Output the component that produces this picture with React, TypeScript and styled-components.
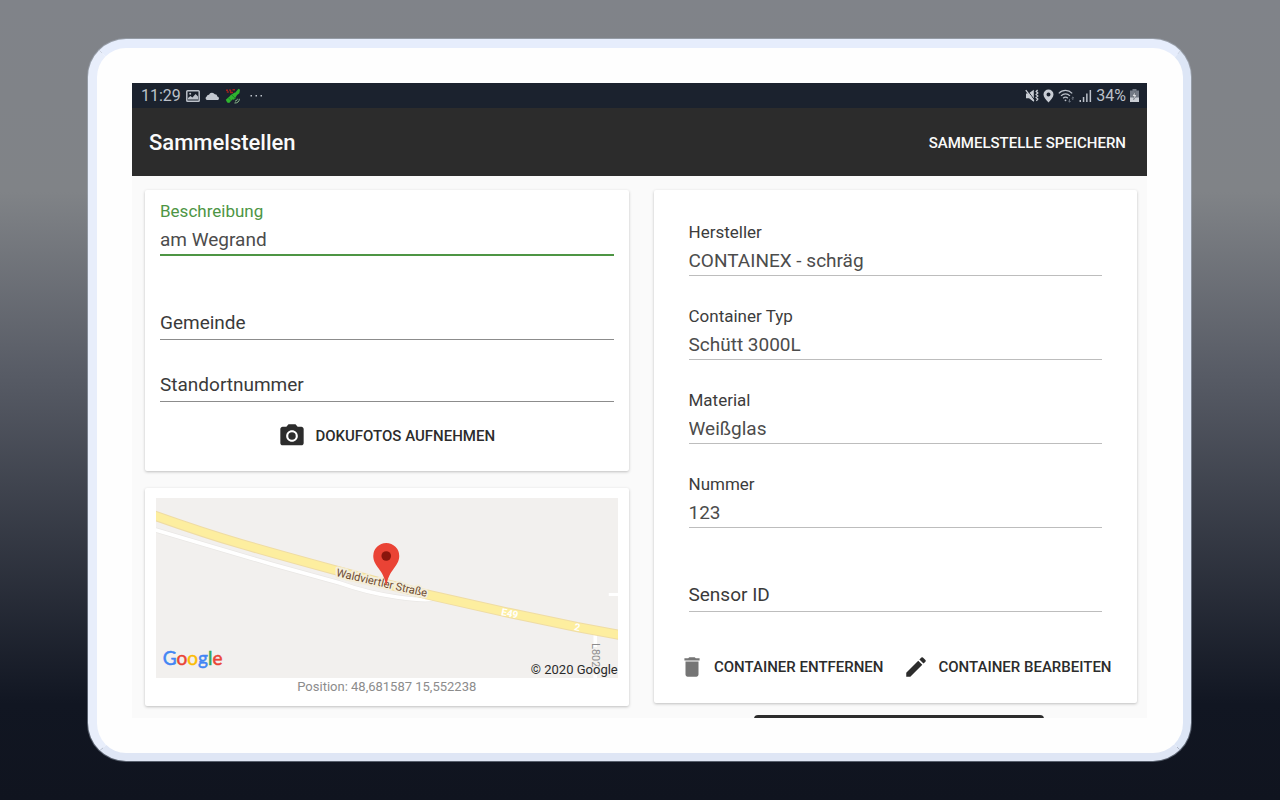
import React, { useId, useState } from "react";
import styled, { createGlobalStyle, css } from "styled-components";
import { MdDelete, MdEdit, MdPhotoCamera } from "react-icons/md";

const GlobalStyle = createGlobalStyle`
  *, *::before, *::after { box-sizing: border-box; }
  body { margin: 0; font-family: Roboto, "Liberation Sans", sans-serif; }
  button, input { font: inherit; }
`;

const Page = styled.div`
  display: flex;
  height: 100vh;
  padding: 39px 89px 39px 88px;
  background: linear-gradient(#808389 0%, #808387 24%, #575b65 47%, #111622 88%, #10141f 100%);
`;

const Tablet = styled.div`
  flex: 1;
  min-width: 0;
  display: flex;
  padding: 35px 36px 35px 35px;
  border-style: solid;
  border-width: 9px 8px 8px 9px;
  border-color: #e6edfc #dde6f6 #dfe6f5 #e8eefb;
  border-radius: 38px;
  background: #fefefe;
  box-shadow: 0 0 0 1px rgba(176, 186, 202, 0.45);
`;

const Screen = styled.main`
  flex: 1;
  min-width: 0;
  display: flex;
  flex-direction: column;
  overflow: hidden;
  background: #fafafa;
`;

const StatusBar = styled.div`
  flex: none;
  display: flex;
  align-items: center;
  justify-content: space-between;
  height: 25px;
  padding: 1px 8px 0 9px;
  background: #1b222e;
  color: #bcc1ca;
  font-size: 16px;
  line-height: 24px;
`;

const StatusGroup = styled.div<{ $gap: number }>`
  display: flex;
  align-items: center;
  gap: ${(p) => p.$gap}px;

  svg { display: block; }
`;

const AppBar = styled.header`
  flex: none;
  display: flex;
  align-items: center;
  justify-content: space-between;
  height: 68px;
  padding: 1px 21px 0 17px;
  background: #2c2c2c;
  color: #fafafa;
`;

const Title = styled.h1`
  margin: 0;
  font-size: 22px;
  font-weight: 500;
  line-height: 28px;
`;

const TextButton = styled.button<{ $tone?: "light" | "dark" }>`
  display: flex;
  align-items: center;
  gap: 9px;
  height: 48px;
  padding: 0;
  border: 0;
  background: none;
  color: ${(p) => (p.$tone === "light" ? "#fafafa" : "#2c2c2c")};
  font-size: 15px;
  font-weight: 500;
  text-transform: uppercase;
  white-space: nowrap;
  cursor: pointer;
`;

const Content = styled.div`
  flex: 1;
  min-height: 0;
  overflow: auto;
  scrollbar-width: none;
  display: grid;
  grid-template-columns: repeat(2, minmax(0, 1fr));
  align-items: start;
  gap: 25px;
  padding: 14px 10px 14px 13px;
`;

const Column = styled.div<{ $gap: number }>`
  display: flex;
  flex-direction: column;
  gap: ${(p) => p.$gap}px;
`;

const Card = styled.section<{ $padding: string }>`
  padding: ${(p) => p.$padding};
  border-radius: 2px;
  background: #fff;
  box-shadow: 0 1px 3px rgba(0, 0, 0, 0.24);
`;

const Fields = styled.div`
  display: flex;
  flex-direction: column;
  gap: 29px;
`;

const FieldBox = styled.div`
  display: flex;
  flex-direction: column;
`;

const FieldLabel = styled.label<{ $active?: boolean }>`
  height: 22px;
  font-size: 17px;
  line-height: 22px;
  color: ${(p) => (p.$active ? "#4d9544" : "#3c3c3c")};
`;

const FieldInput = styled.input<{ $line: "active" | "strong" | "soft"; $empty: boolean }>`
  width: 100%;
  height: ${(p) => (p.$line === "active" ? 34 : 33)}px;
  padding: ${(p) => (p.$empty ? "1px 0 2px" : "3px 0 1px")};
  border: 0;
  border-radius: 0;
  outline: 0;
  background: none;
  color: #4c4c4c;
  font-size: 19px;
  line-height: 24px;

  ${(p) =>
    p.$line === "active"
      ? css`border-bottom: 2px solid #4d9544;`
      : p.$line === "strong"
        ? css`border-bottom: 1px solid #8c8c8c;`
        : css`border-bottom: 1px solid #bdbdbd;`}

  &::placeholder { color: #3a3a3a; opacity: 1; }
`;

const ButtonRow = styled.div<{ $top: number }>`
  display: flex;
  justify-content: center;
  gap: 20px;
  margin-top: ${(p) => p.$top}px;
`;

const MapFrame = styled.div`
  height: 180px;

  svg { display: block; width: 100%; height: 100%; }
`;

const Position = styled.p`
  margin: 0;
  color: #8c8c8c;
  font-size: 13px;
  line-height: 18px;
  text-align: center;
`;

const AddButton = styled.button`
  align-self: center;
  width: 60%;
  height: 48px;
  margin-left: 8px;
  border: 0;
  border-radius: 4px;
  background: #2c2c2c;
`;

type FieldProps = {
  label: string;
  initial?: string;
  line?: "active" | "strong" | "soft";
  compact?: boolean;
};

function Field({ label, initial = "", line = "soft", compact = false }: FieldProps) {
  const id = useId();
  const [value, setValue] = useState(initial);
  const empty = value === "";
  return (
    <FieldBox>
      {!compact && (
        <FieldLabel htmlFor={id} $active={line === "active"}>
          {empty ? "" : label}
        </FieldLabel>
      )}
      <FieldInput
        id={id}
        aria-label={label}
        placeholder={label}
        value={value}
        onChange={(e) => setValue(e.target.value)}
        $line={line}
        $empty={empty}
      />
    </FieldBox>
  );
}

function PictureIcon() {
  return (
    <svg width="14" height="12" viewBox="0 0 14 12" fill="none" stroke="#bcc1ca">
      <rect x="0.8" y="0.8" width="12.4" height="10.4" rx="0.8" strokeWidth="1.5" />
      <path d="M2 9.6V8l2.4-2 2 1.400L9.600 4 12 6.600v3z" fill="#bcc1ca" stroke="none" />
      <circle cx="4.200" cy="3.700" r="1" fill="#bcc1ca" stroke="none" />
    </svg>
  );
}

function CloudIcon() {
  return (
    <svg width="15" height="12" viewBox="0 0 15 12" fill="#c3c8d0">
      <path d="M2 10A1.800 1.800 0 0 1 1.700 6.600 2.200 2.200 0 0 1 4 4.800 3.300 3.300 0 0 1 9.800 4.300 2.400 2.400 0 0 1 12.300 6.600 1.800 1.800 0 0 1 13 10z" />
    </svg>
  );
}

function SatelliteIcon() {
  return (
    <svg width="16" height="16" viewBox="0 0 16 16" fill="none">
      <path d="M1 2.200h2M4.500 1.500l1.500 2M7.500 1.800H10M1.800 4h2M5 4.600h3" stroke="#a3231f" strokeWidth="1.500" />
      <path d="M9.500 5.500 13.500.8l1.500 1-.6 3.400-3 2.300zM5 7.500 9.800 4.500l2.200 2.700L9 11.700l-2.500-.6zM.8 11.800l4.500-4 2.700 3L4.200 15l-2-.4z" fill="#2fb52f" />
      <path d="M6.500 6.500l4.500 4.700M3.500 9.800l2.600 3" stroke="#1a7a26" strokeWidth="0.800" />
      <path d="M9.500 15c3 .2 5-1.600 4.800-4.200M10 13c1.500 0 2.300-.8 2.300-2.200" stroke="#8fbf90" />
    </svg>
  );
}

function DotsIcon() {
  return (
    <svg width="18" height="4" viewBox="0 0 18 4" fill="#bcc1ca">
      <rect x="4.500" y="1" width="1.500" height="1.500" />
      <rect x="9.500" y="1" width="1.500" height="1.500" />
      <rect x="14.500" y="1" width="1.500" height="1.500" />
    </svg>
  );
}

function MuteIcon() {
  return (
    <svg width="14" height="14" viewBox="0 0 14 14" fill="none" stroke="#c9cdd4">
      <path d="M1 4.500h2.500L8.800.8v12L4 9.200H1z" fill="#c9cdd4" stroke="none" />
      <path d="M1.800.6l8 10.800" stroke="#1b222e" strokeWidth="1" />
      <path d="M0.800 1.200l8 10.800" strokeWidth="1.300" />
      <path d="M12.600 1l-1.400 1.500 1.600 1.500-1.600 1.500 1.600 1.500-1.600 1.500 1.600 1.500-1.400 1.800" strokeWidth="1.300" />
    </svg>
  );
}

function PinIcon() {
  return (
    <svg width="11" height="14" viewBox="0 0 11 14" fill="#c9cdd4">
      <path d="M5.500.5a5 5 0 0 1 5 5c0 3-2.600 5-5 8-2.400-3-5-5-5-8a5 5 0 0 1 5-5zm0 3a2 2 0 1 0 0 4 2 2 0 0 0 0-4z" fillRule="evenodd" />
    </svg>
  );
}

function WifiIcon() {
  return (
    <svg width="17" height="14" viewBox="0 0 17 14" fill="none" stroke="#bcc1ca" strokeWidth="1.300">
      <path d="M0.800 4.400C4.600.4 10.400.4 14.200 4.400M3 6.900c2.700-2.700 6.300-2.700 9 0M5.200 9.200c1.300-1.400 3.300-1.400 4.600 0" />
      <circle cx="7.500" cy="11.300" r="0.900" fill="#bcc1ca" stroke="none" />
      <path d="M11.500 10v3M10.300 12l1.200 1.200 1.200-1.200M14.800 11V8M13.600 9.200 14.800 8 16 9.200" stroke="#68707c" strokeWidth="1" />
    </svg>
  );
}

function SignalIcon() {
  return (
    <svg width="13" height="14" viewBox="0 0 13 14" fill="#bcc1ca">
      <rect x="0.500" y="11" width="1.500" height="2" />
      <rect x="3.800" y="8" width="1.500" height="5" />
      <rect x="7.100" y="4.500" width="1.500" height="8.500" />
      <rect x="10.600" y="1" width="1.500" height="12" />
    </svg>
  );
}

function BatteryIcon() {
  return (
    <svg width="9" height="14" viewBox="0 0 9 14">
      <path d="M2.500 0h4v1.400H9V13H0V1.400h2.500z" fill="#737a86" />
      <path d="M0 8.500h9V13H0z" fill="#c9cdd4" />
      <path d="M5.300 2.300 2 7.500h2.200l-.6 3.300L7 5.800H4.800z" fill="#e6e8ec" stroke="#3a414d" strokeWidth="0.400" />
    </svg>
  );
}

const road = "M-6 16 L0 18 Q48 35 84 45.500 T177 71.500 T271 96.500 L354 115 L421 129 L470 138";
const lane = "M-4 31 L0 32 L117 66.500 L184 85 Q212 95 241 99 T276 101";

const logoLetters = [
  ["G", "#4285f4"],
  ["o", "#ea4335"],
  ["o", "#fbbc05"],
  ["g", "#4285f4"],
  ["l", "#34a853"],
  ["e", "#ea4335"],
];

function LocationMap() {
  return (
    <MapFrame>
      <svg viewBox="0 0 462 180" preserveAspectRatio="xMidYMid slice" role="img">
        <rect x="-400" y="-200" width="1262" height="580" fill="#f2f0ee" />
        <g fill="none" stroke="#fff">
          <path d={lane} strokeWidth="5" stroke="#e9e7e5" />
          <path d={lane} strokeWidth="3.500" />
          <path d="M453 96.500h12" strokeWidth="3" />
          <path d="M439.500 133v16M439.500 170v12" strokeWidth="3.500" />
        </g>
        <path d={road} fill="none" stroke="#efdca4" strokeWidth="10" />
        <path d={road} fill="none" stroke="#fdee9f" strokeWidth="8" />
        <g fontFamily="Roboto, sans-serif">
          <text transform="translate(345 117) rotate(12)" fontSize="10" fontWeight="700" fill="#fff">
            E49
          </text>
          <text transform="translate(418 132) rotate(12)" fontSize="10" fontWeight="700" fill="#fff">
            2
          </text>
          <text
            transform="translate(180 78) rotate(13)"
            fontSize="11"
            fill="#6d4a30"
            stroke="#f4eedb"
            strokeWidth="4"
            strokeLinejoin="round"
            paintOrder="stroke"
          >
            Waldviertler Straße
          </text>
          <text transform="translate(436 145) rotate(90)" fontSize="11" fill="#8d8d8d">
            L802
          </text>
          <text x="462" y="176" fontSize="13" textAnchor="end" fill="#2b2b2b" stroke="#f2f0ee" strokeWidth="2" paintOrder="stroke">
            © 2020 Google
          </text>
        </g>
        <path
          d="M230.500 45a13 13 0 0 1 13 13c0 5-2.600 8.600-5.600 12.800-3.200 4.400-6 8.600-7 16.200h-.8c-1-7.600-3.800-11.800-7-16.200-3-4.200-5.600-7.800-5.600-12.800a13 13 0 0 1 13-13z"
          fill="#ea4335"
        />
        <circle cx="230.500" cy="58" r="4.800" fill="#8a150c" />
        <text x="7" y="167" fontFamily="Lato, sans-serif" fontSize="19" strokeWidth="0.500">
          {logoLetters.map(([letter, color], i) => (
            <tspan key={i} fill={color} stroke={color}>
              {letter}
            </tspan>
          ))}
        </text>
      </svg>
    </MapFrame>
  );
}

export default function App() {
  return (
    <>
      <GlobalStyle />
      <Page>
        <Tablet>
          <Screen>
            <StatusBar>
              <StatusGroup $gap={5}>
                <span>11:29</span>
                <PictureIcon />
                <CloudIcon />
                <SatelliteIcon />
                <DotsIcon />
              </StatusGroup>
              <StatusGroup $gap={4}>
                <MuteIcon />
                <PinIcon />
                <WifiIcon />
                <SignalIcon />
                <span>34%</span>
                <BatteryIcon />
              </StatusGroup>
            </StatusBar>
            <AppBar>
              <Title>Sammelstellen</Title>
              <TextButton type="button" $tone="light">
                Sammelstelle speichern
              </TextButton>
            </AppBar>
            <Content>
              <Column $gap={17}>
                <Card $padding="10px 15px 11px">
                  <Fields>
                    <Field label="Beschreibung" initial="am Wegrand" line="active" />
                    <Field label="Gemeinde" line="strong" />
                    <Field label="Standortnummer" line="strong" compact />
                  </Fields>
                  <ButtonRow $top={10}>
                    <TextButton type="button">
                      <MdPhotoCamera size={28} />
                      Dokufotos aufnehmen
                    </TextButton>
                  </ButtonRow>
                </Card>
                <Card $padding="10px 11px">
                  <LocationMap />
                  <Position>Position: 48,681587 15,552238</Position>
                </Card>
              </Column>
              <Column $gap={12}>
                <Card $padding="31px 35px 12px">
                  <Fields>
                    <Field label="Hersteller" initial="CONTAINEX - schräg" />
                    <Field label="Container Typ" initial="Schütt 3000L" />
                    <Field label="Material" initial="Weißglas" />
                    <Field label="Nummer" initial="123" />
                    <Field label="Sensor ID" />
                  </Fields>
                  <ButtonRow $top={31}>
                    <TextButton type="button">
                      <MdDelete size={26} color="#757575" />
                      Container entfernen
                    </TextButton>
                    <TextButton type="button">
                      <MdEdit size={26} />
                      Container bearbeiten
                    </TextButton>
                  </ButtonRow>
                </Card>
                <AddButton type="button" aria-label="Container hinzufügen" />
              </Column>
            </Content>
          </Screen>
        </Tablet>
      </Page>
    </>
  );
}
